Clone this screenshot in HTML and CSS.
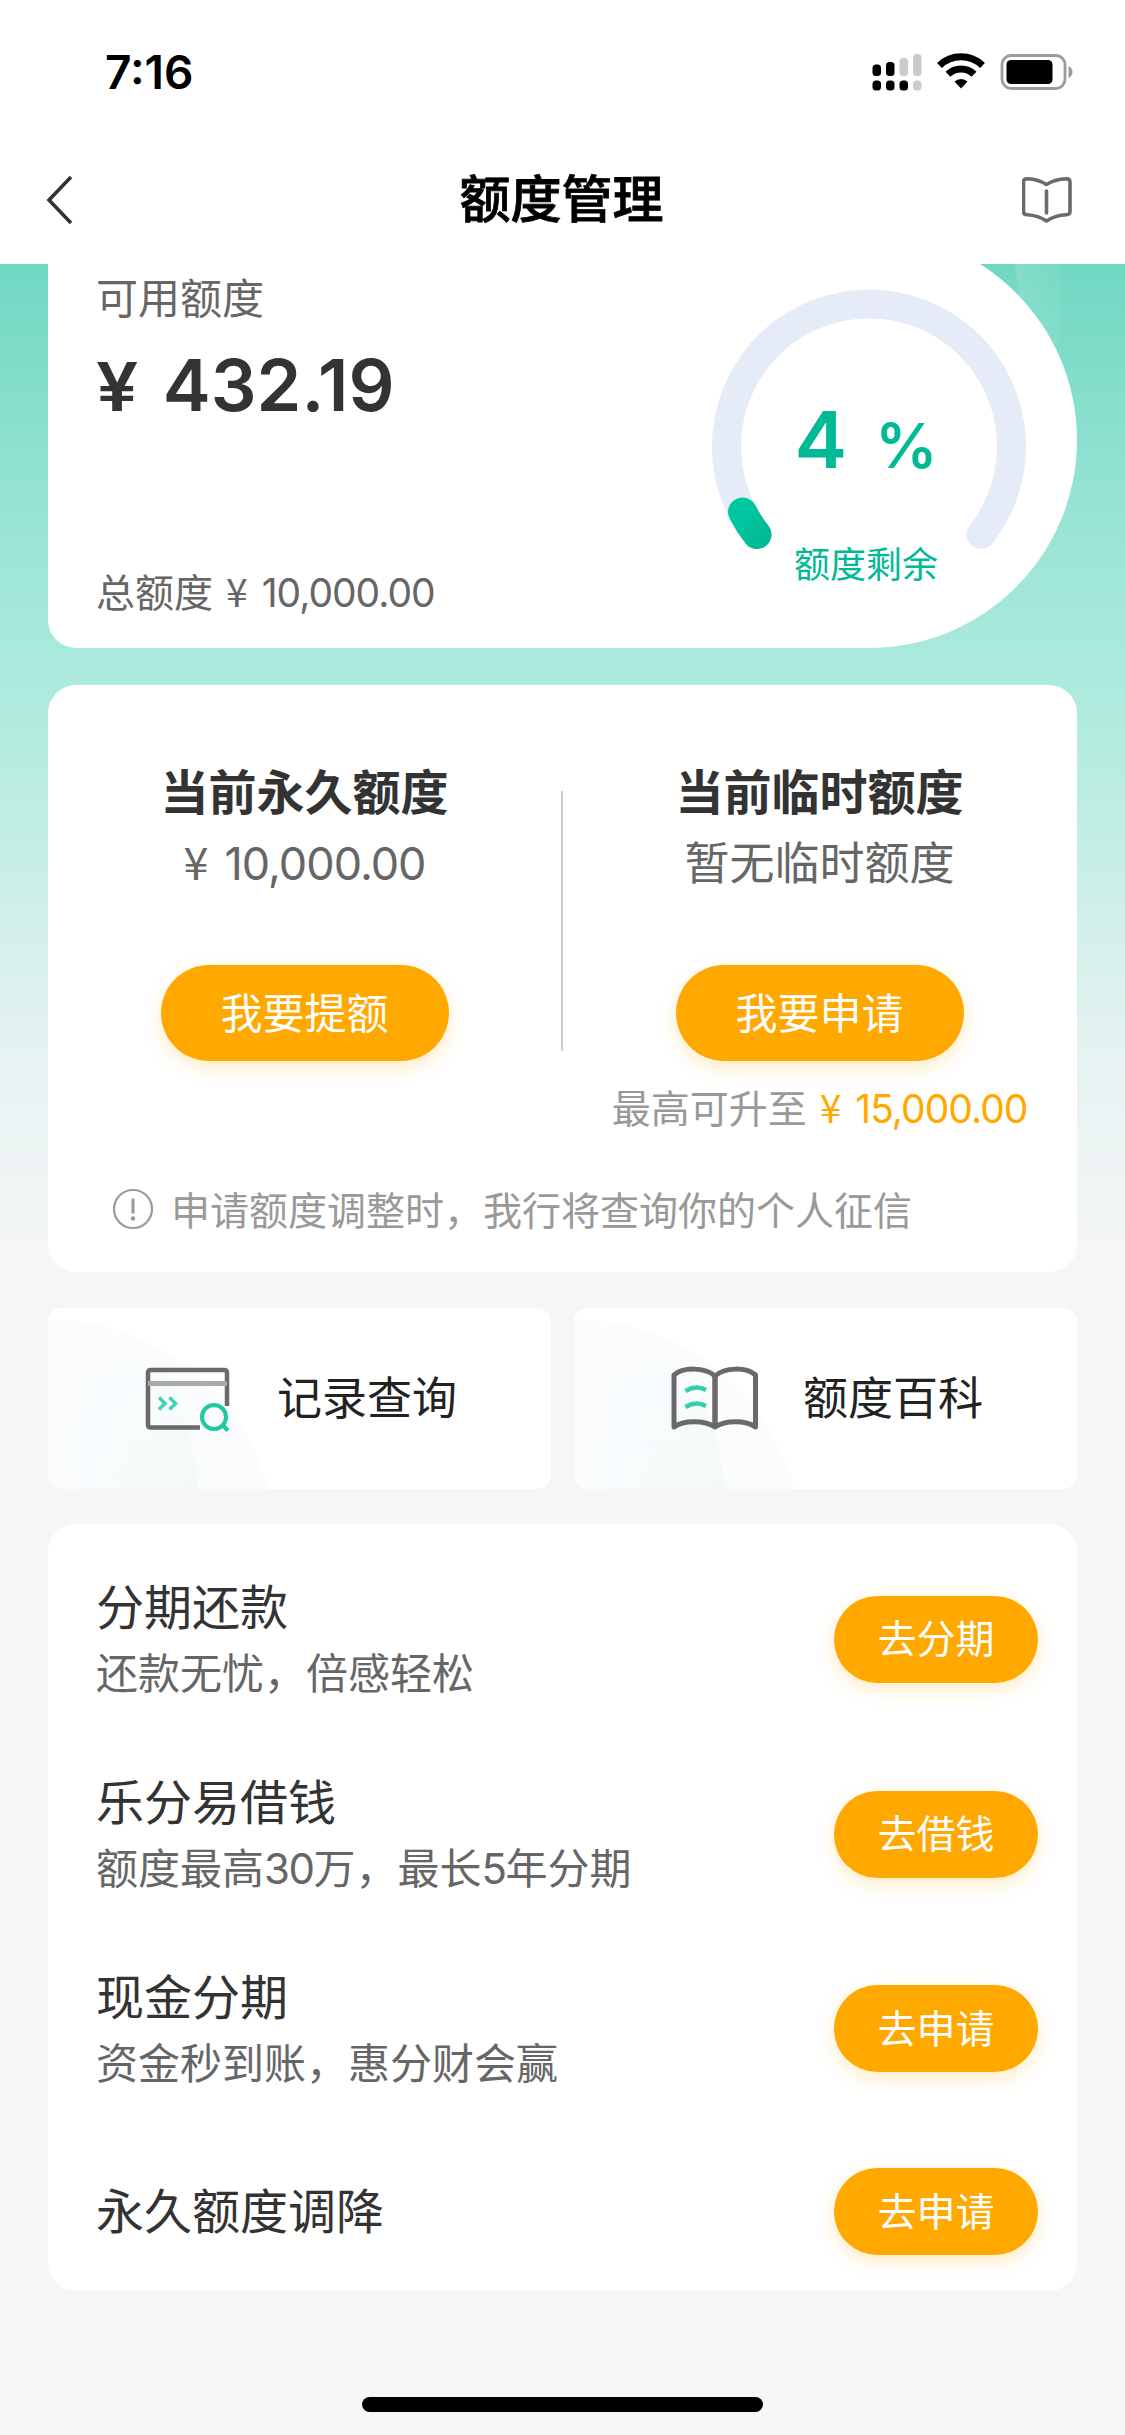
FILE: index.html
```html
<!DOCTYPE html>
<html lang="zh-CN">
<head>
<meta charset="utf-8">
<title>额度管理</title>
<link rel="stylesheet" href="styles.css">
</head>
<body>
<div class="screen">
  <header class="top">
    <div class="status">
      <span class="time">7:16</span>
      <svg class="status-icons" width="204" height="44" viewBox="0 0 204 44">
        <g fill="#000">
          <rect x="1.500" y="14.500" width="8.500" height="11.500" rx="3.500"/><rect x="15" y="12" width="8.500" height="14" rx="3.500"/>
          <rect x="1.500" y="30.500" width="8.500" height="10" rx="3.500"/><rect x="15" y="30.500" width="8.500" height="10" rx="3.500"/><rect x="28.500" y="30.500" width="8.500" height="10" rx="3.500"/>
        </g>
        <g fill="#cbcbcb">
          <rect x="28.500" y="8" width="8.500" height="18" rx="3.500"/><rect x="42" y="4" width="8.500" height="22" rx="3.500"/><rect x="42" y="30.500" width="8.500" height="10" rx="3.500"/>
        </g>
        <g fill="none" stroke="#000" stroke-width="7">
          <path d="M68.500 15.500A31 31 0 0 1 111.500 15.500"/>
          <path d="M77 24.300A18.500 18.500 0 0 1 103 24.300"/>
        </g>
        <path d="M83.500 31.500a9.500 9.500 0 0 1 13 0L90 38.500z"/>
        <rect x="131" y="5.500" width="63" height="33" rx="9" fill="none" stroke="#9b9b9b" stroke-width="2.800"/>
        <rect x="135.500" y="10" width="46" height="24" rx="4.500"/>
        <path d="M197.500 16q4 2 4 6t-4 6z" fill="#9b9b9b"/>
      </svg>
    </div>
    <div class="nav">
      <svg width="60" height="60" viewBox="0 0 60 60"><path d="M30 7L8 30L30 53" fill="none" stroke="#333" stroke-width="3.600"/></svg>
      <h1 class="nav-title">额度管理</h1>
      <svg width="60" height="60" viewBox="10 0 60 60" fill="none" stroke="#6b6b6b" stroke-width="3.600" stroke-linecap="round" stroke-linejoin="round">
        <path d="M34.500 14.500C28 10 21 9 15 8.700Q11.500 8.700 11.500 12V41.500Q11.500 44.500 15 44.700C21 45 28 46.500 34.500 51C41 46.500 48 45 54.500 44.700Q58 44.500 58 41.500V12Q58 8.700 54.500 8.700C48 9 41 10 34.500 14.500Z"/>
        <path d="M34.500 21V43"/>
      </svg>
    </div>
  </header>

  <main class="body">
    <section class="quota">
      <div class="quota-info">
        <div class="quota-label">可用额度</div>
        <div class="quota-value"><span class="yen">¥</span>432.19</div>
        <div class="quota-total">总额度<span class="yen">¥</span><span class="num">10,000.00</span></div>
      </div>
      <div class="gauge">
        <svg width="316" height="316" viewBox="0 0 316 316" fill="none" stroke-width="29" stroke-linecap="round">
          <defs><linearGradient id="g" x1="30" y1="225" x2="60" y2="245" gradientUnits="userSpaceOnUse"><stop offset="0" stop-color="#02c8a2"/><stop offset="1" stop-color="#00b995"/></linearGradient></defs>
          <path d="M46 246.500A142.500 142.500 0 1 1 270 246.500" stroke="#e5ebf7"/>
          <path d="M31.500 224A142.500 142.500 0 0 0 46 246.500" stroke="url(#g)"/>
        </svg>
        <div class="gauge-text">
          <div class="gauge-value">4<span class="percent">%</span></div>
          <div class="gauge-label">额度剩余</div>
        </div>
      </div>
    </section>

    <section class="adjust">
      <div class="adjust-cols">
        <div class="col">
          <h2 class="col-title">当前永久额度</h2>
          <div class="col-value"><span class="yen">¥</span><span class="num">10,000.00</span></div>
          <button class="btn btn-lg">我要提额</button>
        </div>
        <div class="divider"></div>
        <div class="col">
          <h2 class="col-title">当前临时额度</h2>
          <div class="col-value">暂无临时额度</div>
          <button class="btn btn-lg">我要申请</button>
          <div class="max">最高可升至<span class="max-value"><span class="yen">¥</span><span class="num">15,000.00</span></span></div>
        </div>
      </div>
      <div class="notice">
        <svg width="42" height="42" viewBox="0 0 42 42"><circle cx="21" cy="21" r="19" fill="none" stroke="#999" stroke-width="2.200"/><path d="M21 10.500V25.500" stroke="#999" stroke-width="3"/><circle cx="21" cy="30.500" r="2.200" fill="#999"/></svg>
        <span class="notice-text">申请额度调整时，我行将查询你的个人征信</span>
      </div>
    </section>

    <nav class="tiles">
      <a class="tile">
        <svg class="tile-icon" width="92" height="72" viewBox="0 0 92 72" fill="none" stroke="#6a6a6a" stroke-width="4.500">
          <path d="M57 64.500H8Q5 64.500 5 61.500V10Q5 7 8 7H81Q84 7 84 10V43" stroke-linejoin="round"/>
          <path d="M5 20.500H84" stroke="#aaa" stroke-width="5"/>
          <path d="M16 34.500L22 40.500L16 46.500M26.500 34.500L32.500 40.500L26.500 46.500" stroke="#3fd3b3" stroke-width="3.500"/>
          <circle cx="71" cy="54" r="12" stroke="#21c7a2" stroke-width="4"/><path d="M79 61.500L85 67.500" stroke="#21c7a2" stroke-width="4"/>
        </svg>
        <span class="tile-text">记录查询</span>
      </a>
      <a class="tile">
        <svg class="tile-icon" width="92" height="72" viewBox="0 0 92 72" fill="none" stroke="#6a6a6a" stroke-width="5" stroke-linejoin="round">
          <path d="M46 13C36 4 14 4 5 12V64C14 57 36 57 46 64C56 57 77 57 86.500 64V12C77 4 56 4 46 13Z"/>
          <path d="M46 13V64" stroke-width="5.500"/>
          <path d="M16.500 28Q27 21.500 37 27M16.500 44Q27 37.500 37 43" stroke="#35cfae" stroke-width="4.500"/>
        </svg>
        <span class="tile-text">额度百科</span>
      </a>
    </nav>

    <section class="list">
      <div class="row"><div><h3 class="row-title">分期还款</h3><p class="row-sub">还款无忧，倍感轻松</p></div><button class="btn btn-sm">去分期</button></div>
      <div class="row"><div><h3 class="row-title">乐分易借钱</h3><p class="row-sub">额度最高<span class="num">30</span>万，最长<span class="num">5</span>年分期</p></div><button class="btn btn-sm">去借钱</button></div>
      <div class="row"><div><h3 class="row-title">现金分期</h3><p class="row-sub">资金秒到账，惠分财会赢</p></div><button class="btn btn-sm">去申请</button></div>
      <div class="row row-single"><h3 class="row-title">永久额度调降</h3><button class="btn btn-sm">去申请</button></div>
    </section>
    <div class="home"></div>
  </main>
</div>
</body>
</html>
```
FILE: styles.css
```css
* { box-sizing: border-box; margin: 0; padding: 0; }
body {
  width: 1125px;
  background: #f6f6f6;
  font-family: Inter, "Noto Sans CJK SC", sans-serif;
  color: #333;
}
.screen { height: 2435px; display: flex; flex-direction: column; overflow: hidden; }

.top { height: 264px; background: #fff; }
.status { height: 136px; padding: 7px 50px 0 105px; display: flex; justify-content: space-between; align-items: center; }
.time { font-size: 46px; font-weight: 600; line-height: 60px; color: #000; }
.status-icons { display: block; }
.nav { height: 128px; padding: 0 43px 0 41px; display: flex; justify-content: space-between; align-items: center; }
.nav-title { font-size: 51px; font-weight: 500; line-height: 72px; color: #000; -webkit-text-stroke: 0.8px #000; }

.body {
  flex: 1;
  overflow: hidden;
  padding: 0 48px;
  background:
    radial-gradient(circle at 812px 36px, transparent 205px, rgba(255, 255, 255, .12) 207px, rgba(255, 255, 255, .05) 249px, transparent 251px),
    linear-gradient(#70d8c2 0, #87dfcd 146px, #9ee6d7 296px, #a9eadc 396px, #b7ece0 496px, #caefe7 616px, #d8f0eb 696px, #e7f3f2 806px, #f1f5f6 936px, #f6f6f6 996px, #f6f6f6 100%);
}
.yen { font-family: "Noto Sans CJK SC", sans-serif; line-height: 0; }
.num { letter-spacing: -1px; }

.quota {
  margin-top: -32px;
  height: 416px;
  border-radius: 28px 208px 208px 28px;
  background: #fff;
  display: flex;
  justify-content: space-between;
  padding: 37px 48px 0;
}
.quota-label { font-size: 42px; line-height: 60px; color: #666; }
.quota-value { font-size: 72px; line-height: 90px; font-weight: 600; margin-top: 11px; }
.quota-value .yen { display: inline-block; font-family: inherit; font-size: 67px; margin-right: 26px; transform: scaleX(1.12); transform-origin: left; }
.quota-value .yen { margin-right: 29px; }
.quota-total { font-size: 39px; line-height: 54px; color: #666; margin-top: 136px; }
.quota-total .yen { margin: 0 14px 0 13px; }

.gauge { display: grid; width: 316px; height: 316px; margin-top: 19px; margin-right: 2px; }
.gauge > * { grid-area: 1 / 1; }
.gauge-text { color: #00b995; text-align: center; padding: 106px 6px 0 0; }
.gauge-value { font-size: 79px; line-height: 90px; font-weight: 600; }
.percent { font-size: 62px; font-weight: 600; margin-left: 28px; }
.gauge-label { font-size: 36px; line-height: 50px; margin-top: 49px; }

.adjust { margin-top: 37px; height: 587px; border-radius: 28px; background: #fff; padding-top: 73px; }
.adjust-cols { display: flex; height: 409px; margin-right: 1px; }
.col { flex: 1; display: flex; flex-direction: column; align-items: center; }
.divider { width: 2px; height: 260px; margin-top: 33px; background: #ccc; }
.col-title { font-size: 48px; line-height: 70px; font-weight: 700; }
.col-value { font-size: 45px; line-height: 64px; height: 64px; color: #666; margin-top: 4px; }
.col-value .yen { margin-right: 16px; }
.btn {
  border: 0;
  border-radius: 48px;
  background: #ffa800;
  box-shadow: 0 6px 18px rgba(255, 168, 0, .24);
  color: #fff;
  font-family: inherit;
  display: block;
  padding-bottom: 6px;
}
.btn-lg { width: 288px; height: 96px; font-size: 42px; margin-top: 69px; }
.btn-sm { width: 204px; height: 87px; font-size: 39px; }
.max { font-size: 39px; line-height: 54px; color: #999; margin-top: 21px; white-space: nowrap; }
.max-value { color: #ffa800; }
.max-value .yen { margin: 0 14px 0 13px; }
.notice { display: flex; align-items: center; gap: 17px; margin-left: 64px; height: 84px; font-size: 39px; color: #999; }
.notice-text { padding-bottom: 3px; }

.tiles { display: grid; grid-template-columns: 1fr 1fr; gap: 23px; margin-top: 36px; height: 181px; }
.tile {
  border-radius: 14px;
  background:
    radial-gradient(circle at 0 240px, transparent 227px, #fff 230px),
    linear-gradient(#fafcfe 25%, rgba(250, 252, 254, 0)),
    radial-gradient(circle at -220px 215px, transparent 240px, rgba(240, 249, 248, .8) 371px, transparent 373px),
    #fafcfe;
  display: flex;
  align-items: center;
  font-size: 45px;
  color: #222;
  padding-left: 95px;
  gap: 42px;
}
.tile-text { padding-bottom: 6px; }

.list { margin-top: 35px; height: 767px; border-radius: 28px; background: #fff; padding: 18px 39px 0 48px; }
.row { height: 194.8px; display: flex; justify-content: space-between; align-items: center; }
.row-title { font-size: 48px; line-height: 68px; font-weight: 400; }
.row-sub { font-size: 42px; line-height: 60px; color: #666; margin-top: 2px; }
.row-sub .num { letter-spacing: -1.5px; }
.row-single { height: 170.6px; }
.home { width: 401px; height: 15px; border-radius: 8px; background: #000; margin: 106px auto 0; }
```
